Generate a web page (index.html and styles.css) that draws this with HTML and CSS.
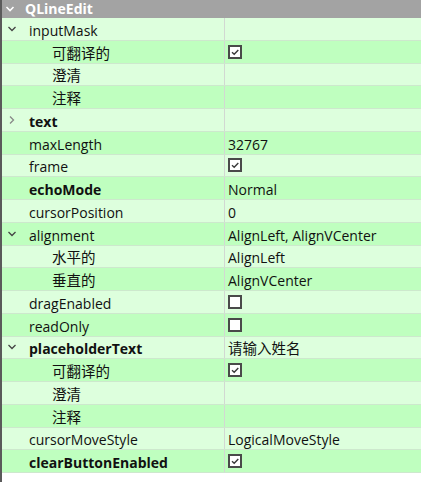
FILE: index.html
```html
<!DOCTYPE html>
<html>
<head>
<meta charset="utf-8">
<link rel="stylesheet" href="styles.css">
</head>
<body>
<div class="editor">
  <div class="header">
    <svg class="chev" width="10" height="8" viewBox="0 0 10 8"><path d="M1.5 2 L5 5.5 L8.5 2" fill="none" stroke="#fff" stroke-width="1.6"/></svg>
    <span>QLineEdit</span>
  </div>

  <div class="row light"><div class="name"><svg class="chev" width="10" height="8" viewBox="0 0 10 8"><path d="M1.5 2 L5 5.5 L8.5 2" fill="none" stroke="#444" stroke-width="1.3"/></svg><span class="t">inputMask</span></div><div class="value"></div></div>
  <div class="row dark"><div class="name child"><span class="t zh">可翻译的</span></div><div class="value"><span class="cb"><svg width="10" height="10" viewBox="0 0 10 10"><path d="M2 5.2 L4.2 7.2 L8.3 3" fill="none" stroke="#3a3a3a" stroke-width="1.4"/></svg></span></div></div>
  <div class="row light"><div class="name child"><span class="t zh">澄清</span></div><div class="value"></div></div>
  <div class="row dark"><div class="name child"><span class="t zh">注释</span></div><div class="value"></div></div>
  <div class="row light"><div class="name"><svg class="chev" width="10" height="10" viewBox="0 0 10 10"><path d="M3 1.5 L6.5 5 L3 8.5" fill="none" stroke="#888" stroke-width="1.3"/></svg><b class="t">text</b></div><div class="value"></div></div>
  <div class="row dark"><div class="name top"><span class="t">maxLength</span></div><div class="value"><span class="t">32767</span></div></div>
  <div class="row light"><div class="name top"><span class="t">frame</span></div><div class="value"><span class="cb"><svg width="10" height="10" viewBox="0 0 10 10"><path d="M2 5.2 L4.2 7.2 L8.3 3" fill="none" stroke="#3a3a3a" stroke-width="1.4"/></svg></span></div></div>
  <div class="row dark"><div class="name top"><b class="t">echoMode</b></div><div class="value"><span class="t">Normal</span></div></div>
  <div class="row light"><div class="name top"><span class="t">cursorPosition</span></div><div class="value"><span class="t">0</span></div></div>
  <div class="row dark"><div class="name"><svg class="chev" width="10" height="8" viewBox="0 0 10 8"><path d="M1.5 2 L5 5.5 L8.5 2" fill="none" stroke="#444" stroke-width="1.3"/></svg><span class="t">alignment</span></div><div class="value"><span class="t">AlignLeft, AlignVCenter</span></div></div>
  <div class="row light"><div class="name child"><span class="t zh">水平的</span></div><div class="value"><span class="t">AlignLeft</span></div></div>
  <div class="row dark"><div class="name child"><span class="t zh">垂直的</span></div><div class="value"><span class="t">AlignVCenter</span></div></div>
  <div class="row light"><div class="name top"><span class="t">dragEnabled</span></div><div class="value"><span class="cb"></span></div></div>
  <div class="row dark"><div class="name top"><span class="t">readOnly</span></div><div class="value"><span class="cb"></span></div></div>
  <div class="row light"><div class="name"><svg class="chev" width="10" height="8" viewBox="0 0 10 8"><path d="M1.5 2 L5 5.5 L8.5 2" fill="none" stroke="#444" stroke-width="1.3"/></svg><b class="t">placeholderText</b></div><div class="value"><span class="t zh">请输入姓名</span></div></div>
  <div class="row dark"><div class="name child"><span class="t zh">可翻译的</span></div><div class="value"><span class="cb"><svg width="10" height="10" viewBox="0 0 10 10"><path d="M2 5.2 L4.2 7.2 L8.3 3" fill="none" stroke="#3a3a3a" stroke-width="1.4"/></svg></span></div></div>
  <div class="row light"><div class="name child"><span class="t zh">澄清</span></div><div class="value"></div></div>
  <div class="row dark"><div class="name child"><span class="t zh">注释</span></div><div class="value"></div></div>
  <div class="row light"><div class="name top"><span class="t">cursorMoveStyle</span></div><div class="value"><span class="t">LogicalMoveStyle</span></div></div>
  <div class="row dark"><div class="name top"><b class="t">clearButtonEnabled</b></div><div class="value"><span class="cb"><svg width="10" height="10" viewBox="0 0 10 10"><path d="M2 5.2 L4.2 7.2 L8.3 3" fill="none" stroke="#3a3a3a" stroke-width="1.4"/></svg></span></div></div>
</div>
</body>
</html>
```

FILE: styles.css
```css
html, body {
  margin: 0;
  padding: 0;
  background: #ffffff;
}
.editor {
  width: 421px;
  height: 482px;
  box-sizing: border-box;
  border-left: 2px solid #5a5a5a;
  font-family: "Open Sans", "Noto Sans CJK SC", sans-serif;
  font-size: 14px;
  color: #111;
}
.header {
  height: 18px;
  background: #a3a3a3;
  color: #fff;
  font-weight: bold;
  display: flex;
  align-items: center;
  padding-left: 3px;
  gap: 10px;
  line-height: 18px;
}
.chev {
  display: block;
  flex: none;
}
.row {
  height: 22.75px;
  box-sizing: border-box;
  border-bottom: 1px solid #cde8cd;
  display: flex;
}
.light { background: #ddffdd; }
.dark { background: #bfffbf; }
.name {
  width: 223px;
  box-sizing: border-box;
  border-right: 1px solid #d2d8d2;
  display: flex;
  align-items: center;
  padding-left: 5px;
  gap: 12px;
  white-space: nowrap;
}
.name.top { padding-left: 27px; }
.name.child { padding-left: 50px; }
.value {
  flex: 1;
  display: flex;
  align-items: center;
  padding-left: 3px;
  white-space: nowrap;
}
.t {
  display: block;
  padding-top: 4px;
  line-height: 18px;
}
.zh {
  font-size: 14.5px;
}
b { font-weight: bold; }
.cb {
  width: 14px;
  height: 14px;
  box-sizing: border-box;
  border: 2px solid #4a4a4a;
  background: #fff;
  display: flex;
}
.cb svg {
  display: block;
}
```
